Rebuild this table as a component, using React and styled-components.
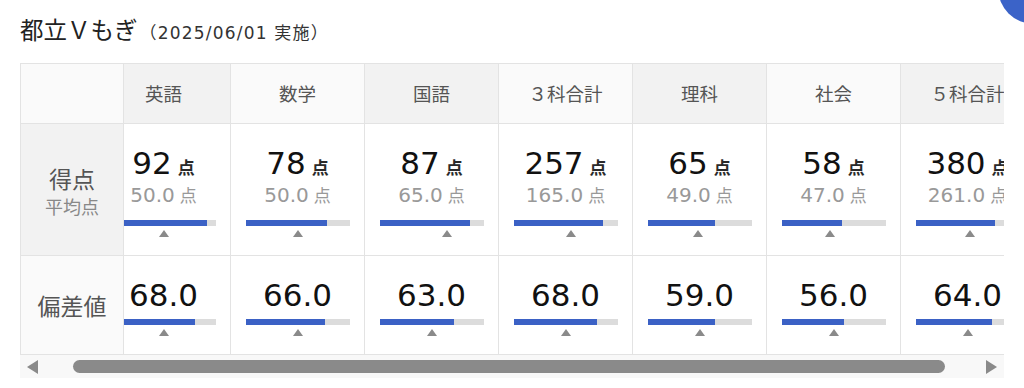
import React, { useLayoutEffect, useRef } from "react";
import styled, { createGlobalStyle } from "styled-components";

const subjects = [
  { name: "英語", score: 92, avg: 50, max: 100, dev: 68 },
  { name: "数学", score: 78, avg: 50, max: 100, dev: 66 },
  { name: "国語", score: 87, avg: 65, max: 100, dev: 63 },
  { name: "３科合計", score: 257, avg: 165, max: 300, dev: 68 },
  { name: "理科", score: 65, avg: 49, max: 100, dev: 59 },
  { name: "社会", score: 58, avg: 47, max: 100, dev: 56 },
  { name: "５科合計", score: 380, avg: 261, max: 500, dev: 64 },
];

// 偏差値 bar scale
const DEV_MIN = 20;
const DEV_MAX = 80;

const GlobalStyle = createGlobalStyle`
  body {
    margin: 0;
    background: #fff;
    font-family: "DejaVu Sans", "Noto Sans CJK JP", sans-serif;
    color: #222;
  }
`;

const Page = styled.div`
  padding: 12px 20px 0 20px;
  width: 984px;
`;

const Title = styled.h1`
  margin: 0 0 17px 0;
  display: flex;
  align-items: baseline;
  height: 34px;
  font-family: "Noto Sans CJK JP", sans-serif;
  font-weight: 400;
  font-size: 23.5px;
  line-height: 34px;
  color: #222;
`;

const TitleSub = styled.span`
  font-family: "DejaVu Sans", "Noto Sans CJK JP", sans-serif;
  font-size: 17px;
  letter-spacing: 1.2px;
  color: #333;
  margin-left: 2px;
`;

const Panel = styled.div`
  width: 984px;
`;

const Grid = styled.div`
  display: flex;
  border-top: 1px solid #e3e3e3;
  border-left: 1px solid #e3e3e3;
`;

const LabelColumn = styled.div`
  flex: none;
  width: 103px;
  display: flex;
  flex-direction: column;
`;

const ScrollArea = styled.div`
  flex: 1;
  min-width: 0;
  overflow-x: auto;
  overflow-y: hidden;
  scrollbar-width: none;
  &::-webkit-scrollbar {
    display: none;
  }
`;

const Columns = styled.div`
  display: flex;
  width: max-content;
`;

const Column = styled.div`
  flex: none;
  width: 134px;
  display: flex;
  flex-direction: column;
`;

const rowHeights = { head: 60, score: 132, dev: 99 };

const Cell = styled.div`
  box-sizing: border-box;
  height: ${(p) => rowHeights[p.$row]}px;
  border-right: 1px solid #e3e3e3;
  border-bottom: 1px solid #e3e3e3;
  background: ${(p) => p.$bg || "#fff"};
  display: flex;
  flex-direction: column;
  align-items: center;
`;

const HeadCell = styled(Cell)`
  justify-content: center;
  font-family: "Noto Sans CJK JP", sans-serif;
  font-size: 18.5px;
  color: #555;
  padding-bottom: 2px;
`;

const LabelCell = styled(Cell)`
  justify-content: center;
  font-family: "Noto Sans CJK JP", sans-serif;
  color: #555;
`;

const LabelMain = styled.div`
  font-size: 23px;
  line-height: 30px;
`;

const LabelSub = styled.div`
  font-size: 18px;
  line-height: 22px;
  color: #888;
  margin-top: 2px;
`;

const ScoreCell = styled(Cell)`
  padding-top: 21px;
`;

const DevCell = styled(Cell)`
  padding-top: 21px;
`;

const ValueLine = styled.div`
  display: flex;
  align-items: baseline;
  justify-content: center;
  font-size: 31px;
  line-height: 36px;
  color: #111;
`;

const Unit = styled.span`
  font-family: "Noto Sans CJK JP", sans-serif;
  font-size: 17px;
  font-weight: 700;
  line-height: 1;
  margin-left: 6px;
  color: #2a2a2a;
`;

const AvgLine = styled.div`
  display: flex;
  align-items: baseline;
  justify-content: center;
  font-size: 20px;
  line-height: 24px;
  color: #999;
  margin-top: 2px;
`;

const AvgUnit = styled.span`
  font-family: "Noto Sans CJK JP", sans-serif;
  font-size: 17px;
  line-height: 1;
  margin-left: 5px;
  color: #999;
`;

const Meter = styled.div`
  position: relative;
  width: 104px;
  margin-top: ${(p) => p.$gap}px;
`;

const Track = styled.div`
  height: 6px;
  background: #dcdcdc;
`;

const Fill = styled.div`
  height: 100%;
  background: #3b61c5;
`;

const Marker = styled.div`
  position: absolute;
  top: 10px;
  width: 0;
  height: 0;
  margin-left: -5px;
  border-left: 5px solid transparent;
  border-right: 5px solid transparent;
  border-bottom: 7px solid #8a8a8a;
`;

const ScrollBar = styled.div`
  display: flex;
  align-items: center;
  height: 23px;
  padding: 0 7px;
  background: #f8f8f8;
`;

const ArrowIcon = styled.svg`
  flex: none;
  width: 11px;
  height: 14px;
  fill: #8a8a8a;
`;

const ScrollTrack = styled.div`
  flex: 1;
  display: flex;
`;

const Thumb = styled.div`
  height: 13px;
  width: 872px;
  margin-left: 35px;
  border-radius: 7px;
  background: #8a8a8a;
`;

const Fab = styled.div`
  position: fixed;
  top: -48px;
  left: 998px;
  width: 72px;
  height: 72px;
  border-radius: 50%;
  background: #3b63c8;
`;

const fmt = (n) => n.toFixed(1);
const pct = (v, min, max) => `${((v - min) / (max - min)) * 100}%`;

function Bar({ value, mark, min, max, gap }) {
  return (
    <Meter $gap={gap}>
      <Track>
        <Fill style={{ width: pct(value, min, max) }} />
      </Track>
      <Marker style={{ left: pct(mark, min, max) }} />
    </Meter>
  );
}

const headBg = (i) => (i % 2 === 0 ? "#f2f2f2" : "#fafafa");

export default function App() {
  const scrollRef = useRef(null);

  useLayoutEffect(() => {
    if (scrollRef.current) scrollRef.current.scrollLeft = 27;
  }, []);

  return (
    <>
      <GlobalStyle />
      <Fab />
      <Page>
        <Title>
          都立Ｖもぎ
          <TitleSub>（2025/06/01 実施）</TitleSub>
        </Title>
        <Panel>
          <Grid>
            <LabelColumn>
              <LabelCell $row="head" $bg="#fafafa" />
              <LabelCell $row="score" $bg="#f2f2f2">
                <LabelMain>得点</LabelMain>
                <LabelSub>平均点</LabelSub>
              </LabelCell>
              <LabelCell $row="dev" $bg="#fafafa">
                <LabelMain>偏差値</LabelMain>
              </LabelCell>
            </LabelColumn>
            <ScrollArea ref={scrollRef}>
              <Columns>
                {subjects.map((s, i) => (
                  <Column key={s.name}>
                    <HeadCell $row="head" $bg={headBg(i)}>
                      {s.name}
                    </HeadCell>
                    <ScoreCell $row="score">
                      <ValueLine>
                        {s.score}
                        <Unit>点</Unit>
                      </ValueLine>
                      <AvgLine>
                        {fmt(s.avg)}
                        <AvgUnit>点</AvgUnit>
                      </AvgLine>
                      <Bar value={s.score} mark={s.avg} min={0} max={s.max} gap={13} />
                    </ScoreCell>
                    <DevCell $row="dev">
                      <ValueLine>{fmt(s.dev)}</ValueLine>
                      <Bar value={s.dev} mark={50} min={DEV_MIN} max={DEV_MAX} gap={6} />
                    </DevCell>
                  </Column>
                ))}
              </Columns>
            </ScrollArea>
          </Grid>
          <ScrollBar>
            <ArrowIcon viewBox="0 0 11 14">
              <path d="M11 0 L11 14 L0 7 Z" />
            </ArrowIcon>
            <ScrollTrack>
              <Thumb />
            </ScrollTrack>
            <ArrowIcon viewBox="0 0 11 14">
              <path d="M0 0 L0 14 L11 7 Z" />
            </ArrowIcon>
          </ScrollBar>
        </Panel>
      </Page>
    </>
  );
}
